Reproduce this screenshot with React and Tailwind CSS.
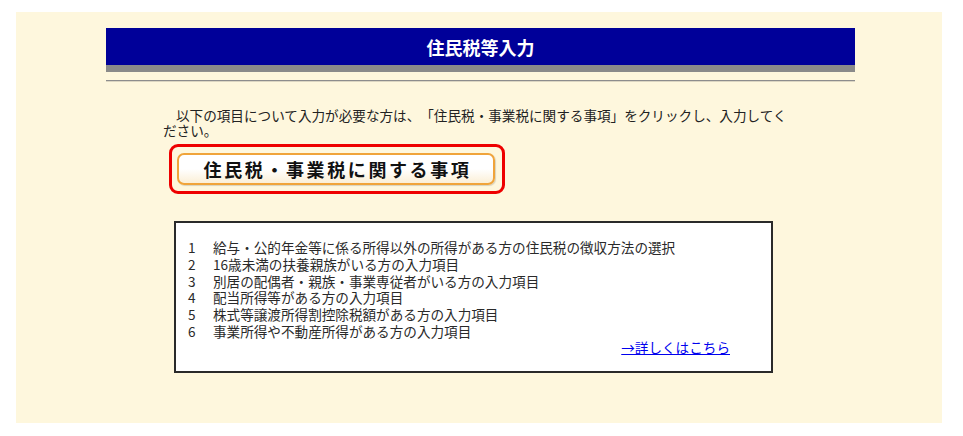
export default function App() {
  const items = [
    "給与・公的年金等に係る所得以外の所得がある方の住民税の徴収方法の選択",
    "16歳未満の扶養親族がいる方の入力項目",
    "別居の配偶者・親族・事業専従者がいる方の入力項目",
    "配当所得等がある方の入力項目",
    "株式等譲渡所得割控除税額がある方の入力項目",
    "事業所得や不動産所得がある方の入力項目",
  ];
  return (
    <div
      className="w-[963px] h-[436px] bg-white pt-[12px] pl-[16px] [text-spacing-trim:space-all]"
      style={{ fontFamily: '"Noto Sans CJK JP", "Noto Sans", sans-serif' }}
    >
      <div className="w-[926px] h-[411px] bg-[#fef7dd] pt-[16px] pl-[90px]">
        <div className="w-[749px]">
          <div className="h-[37px] bg-[#000099] flex items-center justify-center">
            <span className="text-white font-bold text-[18px] leading-none">住民税等入力</span>
          </div>
          <div className="h-[7px] bg-[#8a8a8a]" />
          <div className="mt-[8px] border-t border-[#8d8d8d] border-b border-b-[#dcd6c2]" />
        </div>
        <p className="ml-[57px] mt-[26px] w-[632px] text-[13.6px] leading-[15px] text-[#222] indent-[13px]">
          以下の項目について入力が必要な方は、「住民税・事業税に関する事項」をクリックし、入力してください。
        </p>
        <div className="ml-[63px] mt-[6px] w-[336px] h-[50px] border-[3px] border-[#ee0000] rounded-[9px] flex items-center pl-[5px]">
          <div className="w-[318px] h-[32px] rounded-[7px] border-2 border-[#f0a43a] bg-gradient-to-b from-white via-white to-[#fbefd6] shadow-[1px_1px_1px_rgba(0,0,0,0.15)] flex items-center justify-center">
            <span className="font-bold text-[18px] tracking-[2.6px] text-[#111] leading-none pl-[3px]">
              住民税・事業税に関する事項
            </span>
          </div>
        </div>
        <div className="ml-[68px] mt-[27px] w-[599px] h-[152px] bg-white border-2 border-[#2a2a2a] pt-[16px] pl-[12px]">
          <ul className="text-[13.6px] leading-[16.8px] text-[#2a2a2a]">
            {items.map((t, i) => (
              <li key={i} className="flex">
                <span className="w-[25px] shrink-0">{i + 1}</span>
                <span>{t}</span>
              </li>
            ))}
          </ul>
          <div className="flex justify-end pr-[41px] text-[13.6px] leading-[16px] -mt-[1px]">
            <a href="#" className="text-[#0000ee] underline">→詳しくはこちら</a>
          </div>
        </div>
      </div>
    </div>
  );
}
